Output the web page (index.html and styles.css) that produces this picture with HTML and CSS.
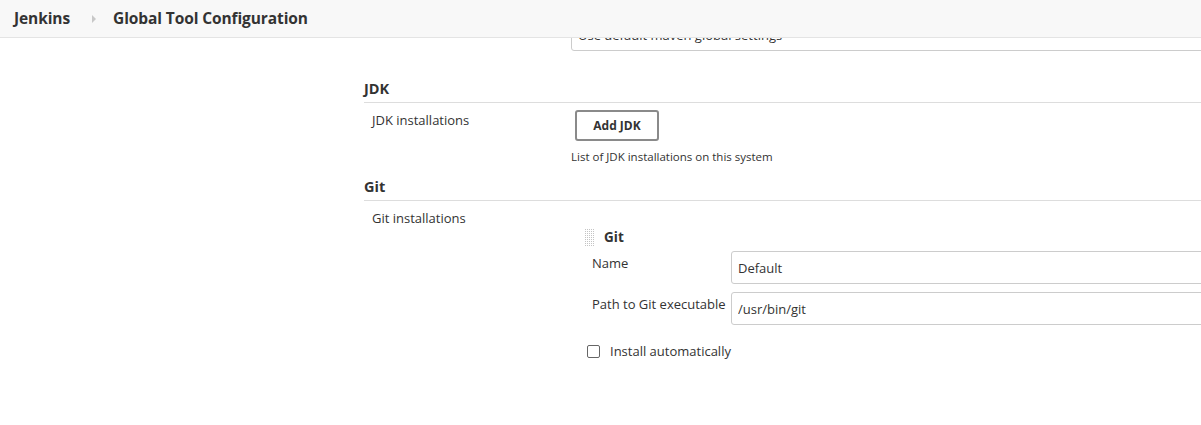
FILE: index.html
```html
<!DOCTYPE html>
<html>
<head>
<meta charset="utf-8">
<link rel="stylesheet" href="styles.css">
</head>
<body>
<header class="topbar">
  <a class="crumb">Jenkins</a>
  <span class="sep"></span>
  <a class="crumb">Global Tool Configuration</a>
</header>
<div class="page">
  <div class="sidebar"></div>
  <main class="main">
    <div class="row first">
      <div class="label"></div>
      <div class="field"><input class="text" value="Use default maven global settings"></div>
    </div>

    <div class="section-head">JDK</div>
    <div class="row">
      <div class="label">JDK installations</div>
      <div class="field">
        <button class="btn">Add JDK</button>
        <div class="help">List of JDK installations on this system</div>
      </div>
    </div>

    <div class="section-head">Git</div>
    <div class="row">
      <div class="label">Git installations</div>
      <div class="field">
        <div class="repeated">
          <div class="chunk-head"><span class="grip"></span><span class="chunk-title">Git</span></div>
          <div class="subrow">
            <div class="sublabel">Name</div>
            <input class="text" value="Default">
          </div>
          <div class="subrow">
            <div class="sublabel">Path to Git executable</div>
            <input class="text" value="/usr/bin/git">
          </div>
          <label class="check"><span class="box"></span>Install automatically</label>
        </div>
      </div>
    </div>
  </main>
</div>
</body>
</html>
```
FILE: styles.css
```css
html, body {
  margin: 0;
  padding: 0;
  background: #fff;
  overflow: hidden;
}
body {
  font-family: "Open Sans", "Noto Sans", sans-serif;
  font-size: 13px;
  color: #333;
}
.topbar {
  position: absolute;
  top: 0;
  left: 0;
  right: 0;
  height: 37px;
  background: #f8f8f8;
  border-bottom: 1px solid #e4e4e4;
  display: flex;
  align-items: center;
  padding-left: 14px;
  z-index: 5;
  box-sizing: content-box;
}
.crumb {
  font-weight: 700;
  font-size: 15.5px;
  color: #333;
  letter-spacing: -0.1px;
  margin-top: -2px;
}
.sep {
  width: 0;
  height: 0;
  border-left: 4px solid #c8c8c8;
  border-top: 4px solid transparent;
  border-bottom: 4px solid transparent;
  margin: 0 17px 0 22px;
}
.page {
  display: flex;
  margin-right: -40px;
}
.sidebar {
  width: 364px;
  flex: none;
}
.main {
  flex: 1;
}
.row {
  display: flex;
}
.row.first {
  margin-top: 18px;
}
.label {
  width: 207px;
  flex: none;
  padding-left: 8px;
  box-sizing: border-box;
  padding-top: 1px;
}
.field {
  flex: 1;
}
input.text {
  display: block;
  width: 100%;
  height: 33px;
  box-sizing: border-box;
  border: 1px solid #ccc;
  border-radius: 3px;
  padding: 0 6px;
  font-family: inherit;
  font-size: 13px;
  color: #333;
  background: #fff;
}
.section-head {
  font-weight: 700;
  font-size: 14.5px;
  margin-top: 14px;
  padding-bottom: 4px;
  border-bottom: 1px solid #ddd;
  line-height: 18px;
}
.row.first + .section-head {
  margin-top: 29px;
}
.section-head + .row {
  margin-top: 7px;
}
.btn {
  margin-left: 4px;
  width: 84px;
  height: 31px;
  border: 2px solid #8a8a8a;
  border-radius: 3px;
  background: #fff;
  font-family: inherit;
  font-weight: 700;
  font-size: 12px;
  color: #333;
  padding: 0;
}
.help {
  font-size: 11.5px;
  margin-top: 9px;
  line-height: 14px;
}
.repeated {
  padding-top: 19px;
  padding-left: 13px;
}
.chunk-head {
  display: flex;
  align-items: center;
  height: 20px;
}
.grip {
  width: 10px;
  height: 19px;
  background-color: #c4c4c4;
  background-image: linear-gradient(90deg, #fff 1px, transparent 1px), linear-gradient(#fff 1px, transparent 1px);
  background-size: 2px 2px;
  margin-right: 10px;
}
.chunk-title {
  font-weight: 700;
  font-size: 13.5px;
}
.subrow {
  display: flex;
  margin-top: 4px;
  padding-left: 8px;
}
.subrow + .subrow {
  margin-top: 8px;
}
.sublabel {
  width: 139px;
  flex: none;
  padding-top: 3px;
  white-space: nowrap;
}
.subrow input.text {
  flex: 1;
}
.check {
  display: flex;
  align-items: center;
  margin-top: 17px;
  padding-left: 3px;
}
.box {
  width: 11px;
  height: 11px;
  border: 1px solid #666;
  border-radius: 2px;
  margin-right: 10px;
}
```
